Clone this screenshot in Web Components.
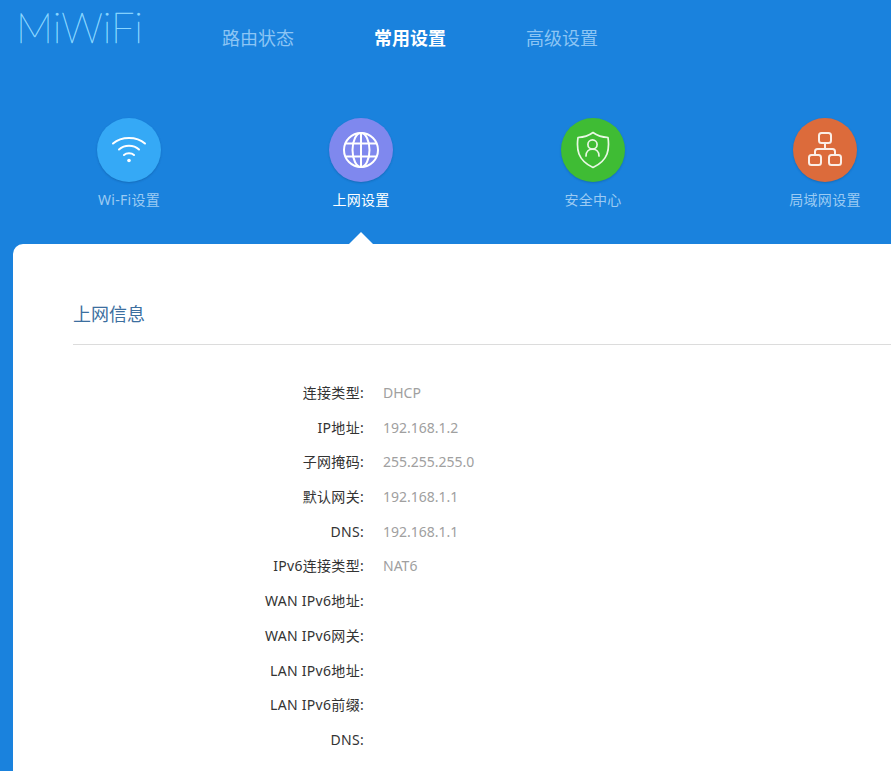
<!DOCTYPE html>
<html lang="zh">
<head>
<meta charset="utf-8">
<title>MiWiFi</title>
<style>
  html, body { margin: 0; height: 100%; overflow: hidden; background: #1a82dd; }
  body { font-family: "Noto Sans", "Noto Sans CJK SC", sans-serif; }
</style>
</head>
<body>
<miwifi-app>
  <miwifi-header slot="header">
    <miwifi-nav-link>路由状态</miwifi-nav-link>
    <miwifi-nav-link active>常用设置</miwifi-nav-link>
    <miwifi-nav-link>高级设置</miwifi-nav-link>
  </miwifi-header>
  <miwifi-tiles slot="tiles">
    <miwifi-tile icon="wifi" color="#35a9f6">Wi-Fi设置</miwifi-tile>
    <miwifi-tile icon="globe" color="#7f88ee" active>上网设置</miwifi-tile>
    <miwifi-tile icon="shield" color="#3fbc34">安全中心</miwifi-tile>
    <miwifi-tile icon="lan" color="#dc6b3b">局域网设置</miwifi-tile>
  </miwifi-tiles>
  <miwifi-panel heading="上网信息">
    <miwifi-row label="连接类型">DHCP</miwifi-row>
    <miwifi-row label="IP地址">192.168.1.2</miwifi-row>
    <miwifi-row label="子网掩码">255.255.255.0</miwifi-row>
    <miwifi-row label="默认网关">192.168.1.1</miwifi-row>
    <miwifi-row label="DNS">192.168.1.1</miwifi-row>
    <miwifi-row label="IPv6连接类型">NAT6</miwifi-row>
    <miwifi-row label="WAN IPv6地址"></miwifi-row>
    <miwifi-row label="WAN IPv6网关"></miwifi-row>
    <miwifi-row label="LAN IPv6地址"></miwifi-row>
    <miwifi-row label="LAN IPv6前缀"></miwifi-row>
    <miwifi-row label="DNS"></miwifi-row>
  </miwifi-panel>
</miwifi-app>

<script>
const ICONS = {
  wifi: `<svg width="36" height="30" viewBox="0 0 36 30" fill="none" stroke="#fff" stroke-width="2" stroke-linecap="round">
    <path d="M2 8.5C10.5 1 25.5 1 34 8.5"/>
    <path d="M8 14.5C13.5 9.5 22.5 9.5 28 14.5"/>
    <path d="M13 20C15.5 17.8 20.5 17.8 23 20"/>
    <circle cx="18" cy="25.5" r="1.8" fill="#fff" stroke="none"/>
  </svg>`,
  globe: `<svg width="38" height="38" viewBox="0 0 38 38" fill="none" stroke="#fff" stroke-width="2">
    <circle cx="19" cy="19" r="17"/>
    <ellipse cx="19" cy="19" rx="8.5" ry="17"/>
    <path d="M4 12.5H34M4 25.5H34M19 2V36"/>
  </svg>`,
  shield: `<svg width="34" height="38" viewBox="0 0 34 38" fill="none" stroke="#e9f8e4" stroke-width="1.7" stroke-linecap="round" stroke-linejoin="round">
    <path d="M17 1.5C21.5 4.8 26.5 6.2 32 6.5C32.8 12 32.8 18 31 23C28.7 29 23.5 33.5 17 36.5C10.5 33.5 5.3 29 3 23C1.2 18 1.2 12 2 6.5C7.5 6.2 12.5 4.8 17 1.5Z"/>
    <circle cx="16.5" cy="13.5" r="4.6"/>
    <path d="M10 25C10 20.5 13 18.2 16.5 18.2C20 18.2 23 20.5 23 25"/>
  </svg>`,
  lan: `<svg width="34" height="36" viewBox="0 0 34 36" fill="none" stroke="#fbeee6" stroke-width="2" stroke-linejoin="round">
    <rect x="11" y="1" width="12" height="10" rx="2.5"/>
    <rect x="1" y="23" width="12" height="10" rx="2.5"/>
    <rect x="21" y="23" width="12" height="10" rx="2.5"/>
    <path d="M17 11V17M7 23V19.5C7 18 8 17 9.5 17H24.5C26 17 27 18 27 19.5V23"/>
  </svg>`
}

class MiwifiApp extends HTMLElement {
  constructor() {
    super()
    this.attachShadow({ mode: "open" }).innerHTML = `<style>
      :host { display: flex; flex-direction: column; width: 891px; height: 771px; overflow: hidden; }
      </style>
      <slot name="header"></slot>
      <slot name="tiles"></slot>
      <slot></slot>`
  }
}

class MiwifiHeader extends HTMLElement {
  constructor() {
    super()
    this.attachShadow({ mode: "open" }).innerHTML = `<style>
      :host { display: flex; align-items: flex-start; height: 118px; padding-left: 16px; box-sizing: border-box; }
      .logo {
        width: 206px; height: 60px;
        font: 100 41.5px/54px Lato, Roboto, sans-serif; color: #8ad6ff; white-space: nowrap;
        -webkit-text-stroke: .5px #8ad6ff;
      }
      nav { display: flex; gap: 80px; padding-top: 24.5px; }
      </style>
      <div class="logo">MiWiFi</div>
      <nav><slot></slot></nav>`
  }
}

class MiwifiNavLink extends HTMLElement {
  constructor() {
    super()
    this.attachShadow({ mode: "open" }).innerHTML = `<style>
      :host { display: block; font-size: 18px; line-height: 26px; color: #8cc5f4; }
      :host([active]) { color: #fff; font-weight: 700; }
      </style><slot></slot>`
  }
}

class MiwifiTiles extends HTMLElement {
  constructor() {
    super()
    this.attachShadow({ mode: "open" }).innerHTML = `<style>
      :host { display: flex; gap: 104px; height: 126px; padding-left: 65px; }
      </style><slot></slot>`
  }
}

class MiwifiTile extends HTMLElement {
  constructor() {
    super()
    let color = this.getAttribute("color")
    this.attachShadow({ mode: "open" }).innerHTML = `<style>
      :host { display: flex; flex-direction: column; align-items: center; position: relative; width: 128px;
        font-size: 14px; line-height: 20px; color: #9ccbf3; }
      :host([active]) { color: #fff; }
      .disc { width: 64px; height: 64px; border-radius: 50%; display: flex; align-items: center; justify-content: center;
        box-shadow: 0 1px 2px rgba(10, 60, 110, .3); }
      .label { margin-top: 8px; white-space: nowrap; letter-spacing: .3px; }
      :host([active])::after {
        content: ""; position: absolute; left: 50%; bottom: 0; margin-left: -12px;
        border: solid transparent; border-width: 0 12px 12px; border-bottom-color: #fff;
      }
      </style>
      <div class="disc" style="background:${color}">${ICONS[this.getAttribute("icon")]}</div>
      <div class="label"><slot></slot></div>`
  }
}

class MiwifiPanel extends HTMLElement {
  constructor() {
    super()
    this.attachShadow({ mode: "open" }).innerHTML = `<style>
      :host { display: block; flex: 1; margin-left: 13px; background: #fff; border-radius: 10px 0 0 0; padding: 0 0 0 60px; }
      h2 { margin: 0; height: 101px; box-sizing: border-box; padding-top: 57px; font-size: 18px; line-height: 26px; font-weight: 400;
        color: #3c6f9f; border-bottom: 1px solid #dcdcdc; }
      .rows { padding-top: 31px; }
      </style>
      <h2>${this.getAttribute("heading")}</h2>
      <div class="rows"><slot></slot></div>`
  }
}

class MiwifiRow extends HTMLElement {
  constructor() {
    super()
    this.attachShadow({ mode: "open" }).innerHTML = `<style>
      :host { display: flex; height: 34.7px; font-size: 14px; line-height: 34.7px; }
      .key { width: 291px; text-align: right; color: #333; white-space: nowrap; letter-spacing: .3px; }
      .val { margin-left: 19px; color: #a0a0a0; }
      </style>
      <div class="key">${this.getAttribute("label")}:</div>
      <div class="val"><slot></slot></div>`
  }
}

customElements.define("miwifi-app", MiwifiApp)
customElements.define("miwifi-header", MiwifiHeader)
customElements.define("miwifi-nav-link", MiwifiNavLink)
customElements.define("miwifi-tiles", MiwifiTiles)
customElements.define("miwifi-tile", MiwifiTile)
customElements.define("miwifi-panel", MiwifiPanel)
customElements.define("miwifi-row", MiwifiRow)
</script>
</body>
</html>
